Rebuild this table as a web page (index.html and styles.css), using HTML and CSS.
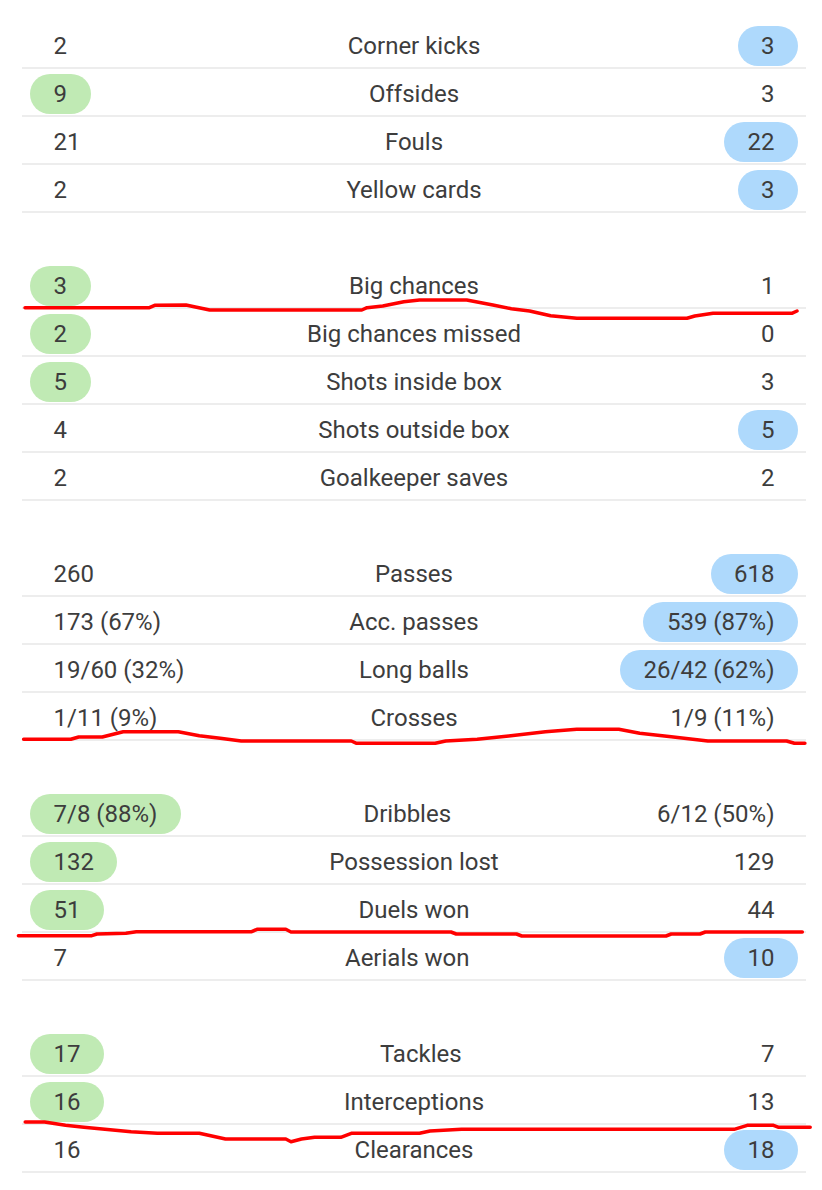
FILE: index.html
```html
<!DOCTYPE html>
<html>
<head>
<meta charset="utf-8">
<link rel="stylesheet" href="styles.css">
</head>
<body>
<div class="page">
  <div class="stats">
    <section class="group">
      <div class="row"><div class="val left"><span class="num">2</span></div><div class="label">Corner kicks</div><div class="val right"><span class="num away">3</span></div></div>
      <div class="row"><div class="val left"><span class="num home">9</span></div><div class="label">Offsides</div><div class="val right"><span class="num">3</span></div></div>
      <div class="row"><div class="val left"><span class="num">21</span></div><div class="label">Fouls</div><div class="val right"><span class="num away">22</span></div></div>
      <div class="row"><div class="val left"><span class="num">2</span></div><div class="label">Yellow cards</div><div class="val right"><span class="num away">3</span></div></div>
    </section>
    <section class="group">
      <div class="row"><div class="val left"><span class="num home">3</span></div><div class="label">Big chances</div><div class="val right"><span class="num">1</span></div></div>
      <div class="row"><div class="val left"><span class="num home">2</span></div><div class="label">Big chances missed</div><div class="val right"><span class="num">0</span></div></div>
      <div class="row"><div class="val left"><span class="num home">5</span></div><div class="label">Shots inside box</div><div class="val right"><span class="num">3</span></div></div>
      <div class="row"><div class="val left"><span class="num">4</span></div><div class="label">Shots outside box</div><div class="val right"><span class="num away">5</span></div></div>
      <div class="row"><div class="val left"><span class="num">2</span></div><div class="label">Goalkeeper saves</div><div class="val right"><span class="num">2</span></div></div>
    </section>
    <section class="group">
      <div class="row"><div class="val left"><span class="num">260</span></div><div class="label">Passes</div><div class="val right"><span class="num away">618</span></div></div>
      <div class="row"><div class="val left"><span class="num">173 (67%)</span></div><div class="label">Acc. passes</div><div class="val right"><span class="num away">539 (87%)</span></div></div>
      <div class="row"><div class="val left"><span class="num">19/60 (32%)</span></div><div class="label">Long balls</div><div class="val right"><span class="num away">26/42 (62%)</span></div></div>
      <div class="row"><div class="val left"><span class="num">1/11 (9%)</span></div><div class="label">Crosses</div><div class="val right"><span class="num">1/9 (11%)</span></div></div>
    </section>
    <section class="group">
      <div class="row"><div class="val left"><span class="num home">7/8 (88%)</span></div><div class="label">Dribbles</div><div class="val right"><span class="num">6/12 (50%)</span></div></div>
      <div class="row"><div class="val left"><span class="num home">132</span></div><div class="label">Possession lost</div><div class="val right"><span class="num">129</span></div></div>
      <div class="row"><div class="val left"><span class="num home">51</span></div><div class="label">Duels won</div><div class="val right"><span class="num">44</span></div></div>
      <div class="row"><div class="val left"><span class="num">7</span></div><div class="label">Aerials won</div><div class="val right"><span class="num away">10</span></div></div>
    </section>
    <section class="group">
      <div class="row"><div class="val left"><span class="num home">17</span></div><div class="label">Tackles</div><div class="val right"><span class="num">7</span></div></div>
      <div class="row"><div class="val left"><span class="num home">16</span></div><div class="label">Interceptions</div><div class="val right"><span class="num">13</span></div></div>
      <div class="row"><div class="val left"><span class="num">16</span></div><div class="label">Clearances</div><div class="val right"><span class="num away">18</span></div></div>
    </section>
  </div>
  <svg class="marks" width="822" height="1190" viewBox="0 0 822 1190" xmlns="http://www.w3.org/2000/svg">
    <g fill="none" stroke="#ff0000" stroke-width="3.5" stroke-linejoin="round" stroke-linecap="round">
      <polyline points="25,307.7 149.4,307.7 154.7,305.3 186,305 196.6,307.3 209.7,310 361.8,310 367,307.7 382.8,306 403.8,301.7 419.5,300 466.7,300 492.9,305 511.3,308.7 529.6,311 550.6,315.7 576.8,318.3 687,318.3 694.8,316 713,313.3 791.8,313.3 797,311"/>
      <polyline points="23.6,739.3 70.8,739.3 78.7,737 102.3,737 123.2,731.7 178.3,731.7 199.3,735.7 220.2,738.3 241.2,741 351.3,741 356.6,743.3 435.2,743.3 445.7,741 477.2,739.3 508.7,736 545.4,731.7 576.8,729.3 618.8,729.3 639.7,733.3 671.2,736.7 707.9,741 786.6,741 794.4,743.3 804.9,743.3"/>
      <polyline points="18.4,935.7 91.8,935.7 97,934 125.9,933.3 136.3,931.7 251.7,931.7 257,929.3 285.8,929.3 291,932 451,932 456.2,934 516.5,934 521.8,936 666,936 671.2,934 700,934 705.3,932 802.3,932"/>
      <polyline points="25.2,1122 44.6,1122 65.5,1125.3 83.9,1127.3 104.9,1129.3 131.1,1131.7 157.3,1133.3 199.3,1133.3 225.5,1139 285.8,1139 291,1141.7 301.5,1139 314.6,1137.3 340.8,1137.3 351.3,1133.3 419.5,1133.3 430,1131 461.5,1129.3 734.1,1129.3 747.2,1125.3 773.5,1125.3 778.7,1127.3 810.2,1127.3"/>
    </g>
  </svg>
</div>
</body>
</html>
```

FILE: styles.css
```css
* { box-sizing: border-box; }
html, body {
  margin: 0;
  padding: 0;
  background: #ffffff;
}
.page {
  position: relative;
  width: 822px;
  height: 1190px;
  overflow: hidden;
  font-family: Roboto, "Liberation Sans", sans-serif;
  color: #3d3d3d;
}
.stats {
  padding: 21px 16px 0 22px;
  display: flex;
  flex-direction: column;
  gap: 48px;
}
.group {
  display: flex;
  flex-direction: column;
}
.row {
  height: 48px;
  padding-top: 4px;
  border-bottom: 2px solid #ededed;
  display: flex;
  align-items: center;
  font-size: 24px;
  line-height: 28px;
}
.val {
  display: flex;
  align-items: center;
  padding: 0 8px;
  flex: none;
}
.label {
  flex: 1;
  text-align: center;
  white-space: nowrap;
}
.num {
  display: inline-flex;
  align-items: center;
  justify-content: center;
  height: 40px;
  min-width: 60px;
  padding: 0 23.5px;
  border-radius: 20px;
  white-space: nowrap;
}
.left .num { justify-content: flex-start; }
.right .num { justify-content: flex-end; }
.left .num.home, .right .num.away { justify-content: center; }
.home { background: #c0eab4; }
.away { background: #aed9fc; }
.marks {
  position: absolute;
  left: 0;
  top: 0;
  pointer-events: none;
}
```
